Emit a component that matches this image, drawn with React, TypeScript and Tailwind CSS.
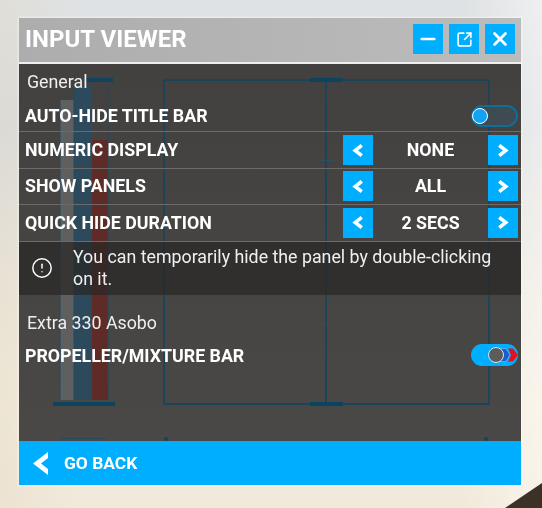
import { CircleAlert, Minus, SquareArrowOutUpRight, X } from "lucide-react";

const font = "font-['Roboto',sans-serif]";

function Chevron({ dir, className }: { dir: "left" | "right"; className?: string }) {
  return (
    <svg viewBox="0 0 12 16" className={className} fill="none">
      <path
        d={dir === "left" ? "M10 2.500 L3 8 L10 13.500" : "M2 2.500 L9 8 L2 13.500"}
        stroke="currentColor"
        strokeWidth="3.8"
      />
    </svg>
  );
}

function Square({ children }: { children: React.ReactNode }) {
  return <div className="flex h-[30px] w-[30px] items-center justify-center bg-[#00aeff] text-white">{children}</div>;
}

function Stepper({ label, value }: { label: string; value: string }) {
  return (
    <div className="box-border flex h-[36.4px] items-center border-b border-[#6d6b69] pl-[6px] pr-[3px]">
      <span className="flex-1 text-[17.8px] font-bold text-white">{label}</span>
      <Square>
        <Chevron dir="left" className="h-[15px] w-[12px]" />
      </Square>
      <span className="w-[115px] text-center text-[17.8px] font-bold text-white">{value}</span>
      <Square>
        <Chevron dir="right" className="h-[15px] w-[12px]" />
      </Square>
    </div>
  );
}

function Diagram() {
  return (
    <svg className="absolute left-0 top-0" width="502" viewBox="19 64 502 377" style={{ height: 377 }} fill="none">
      <rect x="60" y="100" width="14" height="300" fill="#5f5f5f" />
      <rect x="74" y="86" width="18" height="314" fill="#2c4a5c" />
      <rect x="92" y="140" width="16" height="260" fill="#5e2b27" />
      <path d="M60 100V400M74 86V400M108 84V400" stroke="#1f4a62" strokeWidth="1" />
      <path d="M85 80H113M53 404H115" stroke="#0e4460" strokeWidth="4" />
      <rect x="164" y="80" width="325" height="324" stroke="#0f4560" strokeWidth="1.5" />
      <path d="M326 80V404" stroke="#0f4560" strokeWidth="1.5" />
      <path d="M310 80H343M310 404H343" stroke="#0b4460" strokeWidth="4" />
      <path d="M318 160.500H334M318 323.500H334" stroke="#2b5060" strokeWidth="1" />
      <path d="M61 441V438.500H105V441" stroke="#274a5c" strokeWidth="1" />
      <circle cx="166" cy="439" r="2" fill="#0f4560" />
      <circle cx="486" cy="439" r="2" fill="#0f4560" />
    </svg>
  );
}

export default function App() {
  return (
    <div
      className={`${font} relative box-border h-[508px] w-[542px] overflow-hidden bg-[linear-gradient(90deg,rgba(225,215,195,0.35)_0%,rgba(255,255,255,0)_15%,rgba(255,255,255,0)_85%,rgba(255,255,255,0.45)_100%),linear-gradient(180deg,#dfe2e4_0%,#d9dcdd_25%,#ece7dd_55%,#f4eddc_80%,#f1e9da_100%)] pl-[19px] pt-[18px]`}
    >
      <svg className="absolute bottom-0 right-0" width="40" height="28" viewBox="0 0 40 28">
        <path d="M3 28 L40 3 V28 Z" fill="#3c3127" />
      </svg>
      <div className="relative flex h-[467px] w-[502px] flex-col shadow-[0_0_2px_1px_rgba(255,255,255,0.5)] blur-[0.3px]">
        <div className="box-border flex h-[46px] items-start justify-between border-b-2 border-[#eeeeee] bg-[linear-gradient(90deg,#adadad,#bcbcbc)] pl-[6px] pr-[6px] pt-[6px]">
          <span className="text-[24px] font-bold leading-[30px] text-white">INPUT VIEWER</span>
          <div className="flex gap-[6px]">
            <Square>
              <Minus size={22} strokeWidth={2.6} />
            </Square>
            <Square>
              <SquareArrowOutUpRight size={17} strokeWidth={2.2} />
            </Square>
            <Square>
              <X size={22} strokeWidth={3} />
            </Square>
          </div>
        </div>

        <div className="relative flex flex-1 flex-col bg-[linear-gradient(180deg,#434140,#4b4947)]">
          <Diagram />
          <div className="relative flex flex-1 flex-col">
            <div className="flex h-[36px] items-center pl-[8px] text-[17.8px] text-[#efefef]">General</div>
            <div className="-mt-[4px] box-border flex h-[36.4px] items-center border-b border-[#6d6b69] pl-[6px] pr-[3px] pt-[6px]">
              <span className="flex-1 text-[17.8px] font-bold text-white">AUTO-HIDE TITLE BAR</span>
              <div className="-mt-[2px] box-border flex h-[22px] w-[47px] items-center rounded-full border-2 border-[#0f6d9c] bg-[#3f4b52]">
                <div className="-ml-[1px] h-[16px] w-[16px] rounded-full border border-white bg-[#12a4f4]" />
              </div>
            </div>
            <Stepper label="NUMERIC DISPLAY" value="NONE" />
            <Stepper label="SHOW PANELS" value="ALL" />
            <Stepper label="QUICK HIDE DURATION" value="2 SECS" />
            <div className="flex h-[53.4px] items-center bg-[rgba(40,39,38,0.72)]">
              <div className="flex w-[54px] justify-start pl-[12px]">
                <CircleAlert size={22} strokeWidth={1.6} className="text-white" />
              </div>
              <p className="w-[428px] text-[17.8px] leading-[22px] text-[#efefef]">
                You can temporarily hide the panel by double-clicking on it.
              </p>
            </div>
            <div className="mt-[17px] flex h-[22px] items-center pl-[8px] text-[17.8px] text-[#efefef]">Extra 330 Asobo</div>
            <div className="mt-[10px] flex h-[22px] items-center pl-[6px] pr-[3px]">
              <span className="flex-1 pt-[2px] text-[17.8px] font-bold text-white">PROPELLER/MIXTURE BAR</span>
              <div className="relative flex h-[22px] w-[47px] items-center rounded-full bg-[#00aeff]">
                <svg className="absolute left-[30px] top-[4px]" width="17" height="14" viewBox="0 0 17 14">
                  <path d="M0 0.500H5L9 7L5 13.500H0Z" fill="#1a5fd0" stroke="rgba(255,255,255,0.45)" strokeWidth="0.7" />
                  <path d="M7 0.500H12L17 7L12 13.500H7L10 7Z" fill="#e2101c" />
                </svg>
                <div className="absolute left-[17px] h-[16px] w-[16px] rounded-full border border-[#d8e4ea] bg-[#5c5c5c]" />
              </div>
            </div>
          </div>
          <div className="relative flex h-[44px] items-center gap-[16px] bg-[#00aeff] pl-[14px] text-white">
            <svg viewBox="0 0 15 23" className="h-[23px] w-[15px]" fill="currentColor">
              <path d="M15 0 L0 11.500 L15 23 V17 L8 11.500 L15 6 Z" />
            </svg>
            <span className="pt-[1px] text-[17.4px] font-bold">GO BACK</span>
          </div>
        </div>
      </div>
    </div>
  );
}
